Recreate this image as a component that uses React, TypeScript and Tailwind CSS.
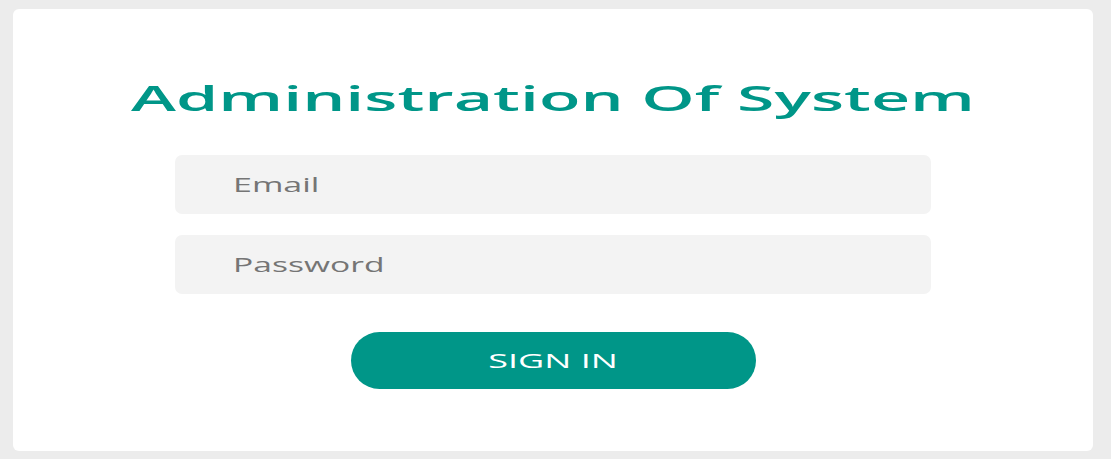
import React from "react";

export default function App() {
  return (
    <div className="w-[1111px] h-[459px] bg-[#ececec] pt-[9px] pl-[13px] font-['Open_Sans',sans-serif]">
      <div className="w-[1080px] h-[442px] bg-white rounded-[6px] flex flex-col items-center">
        <div className="mt-[64px] h-[50px] flex items-center justify-center w-full">
          <span className="inline-block text-[34px] font-semibold leading-none text-[#009688] scale-x-[2] origin-center whitespace-nowrap">
            Administration Of System
          </span>
        </div>
        <div className="mt-[32px] w-[756px] flex flex-col gap-[21px]">
          <div className="h-[59px] bg-[#f3f3f3] rounded-[7px] flex items-center pl-[58px]">
            <span className="inline-block text-[20px] text-[#757575] scale-x-[1.7] origin-left">Email</span>
          </div>
          <div className="h-[59px] bg-[#f3f3f3] rounded-[7px] flex items-center pl-[58px]">
            <span className="inline-block text-[20px] text-[#757575] scale-x-[1.68] origin-left">Password</span>
          </div>
        </div>
        <button className="mt-[38px] w-[405px] h-[57px] rounded-full bg-[#009688] flex items-center justify-center">
          <span className="inline-block text-[20px] font-medium text-white scale-x-[1.8]">SIGN IN</span>
        </button>
      </div>
    </div>
  );
}
